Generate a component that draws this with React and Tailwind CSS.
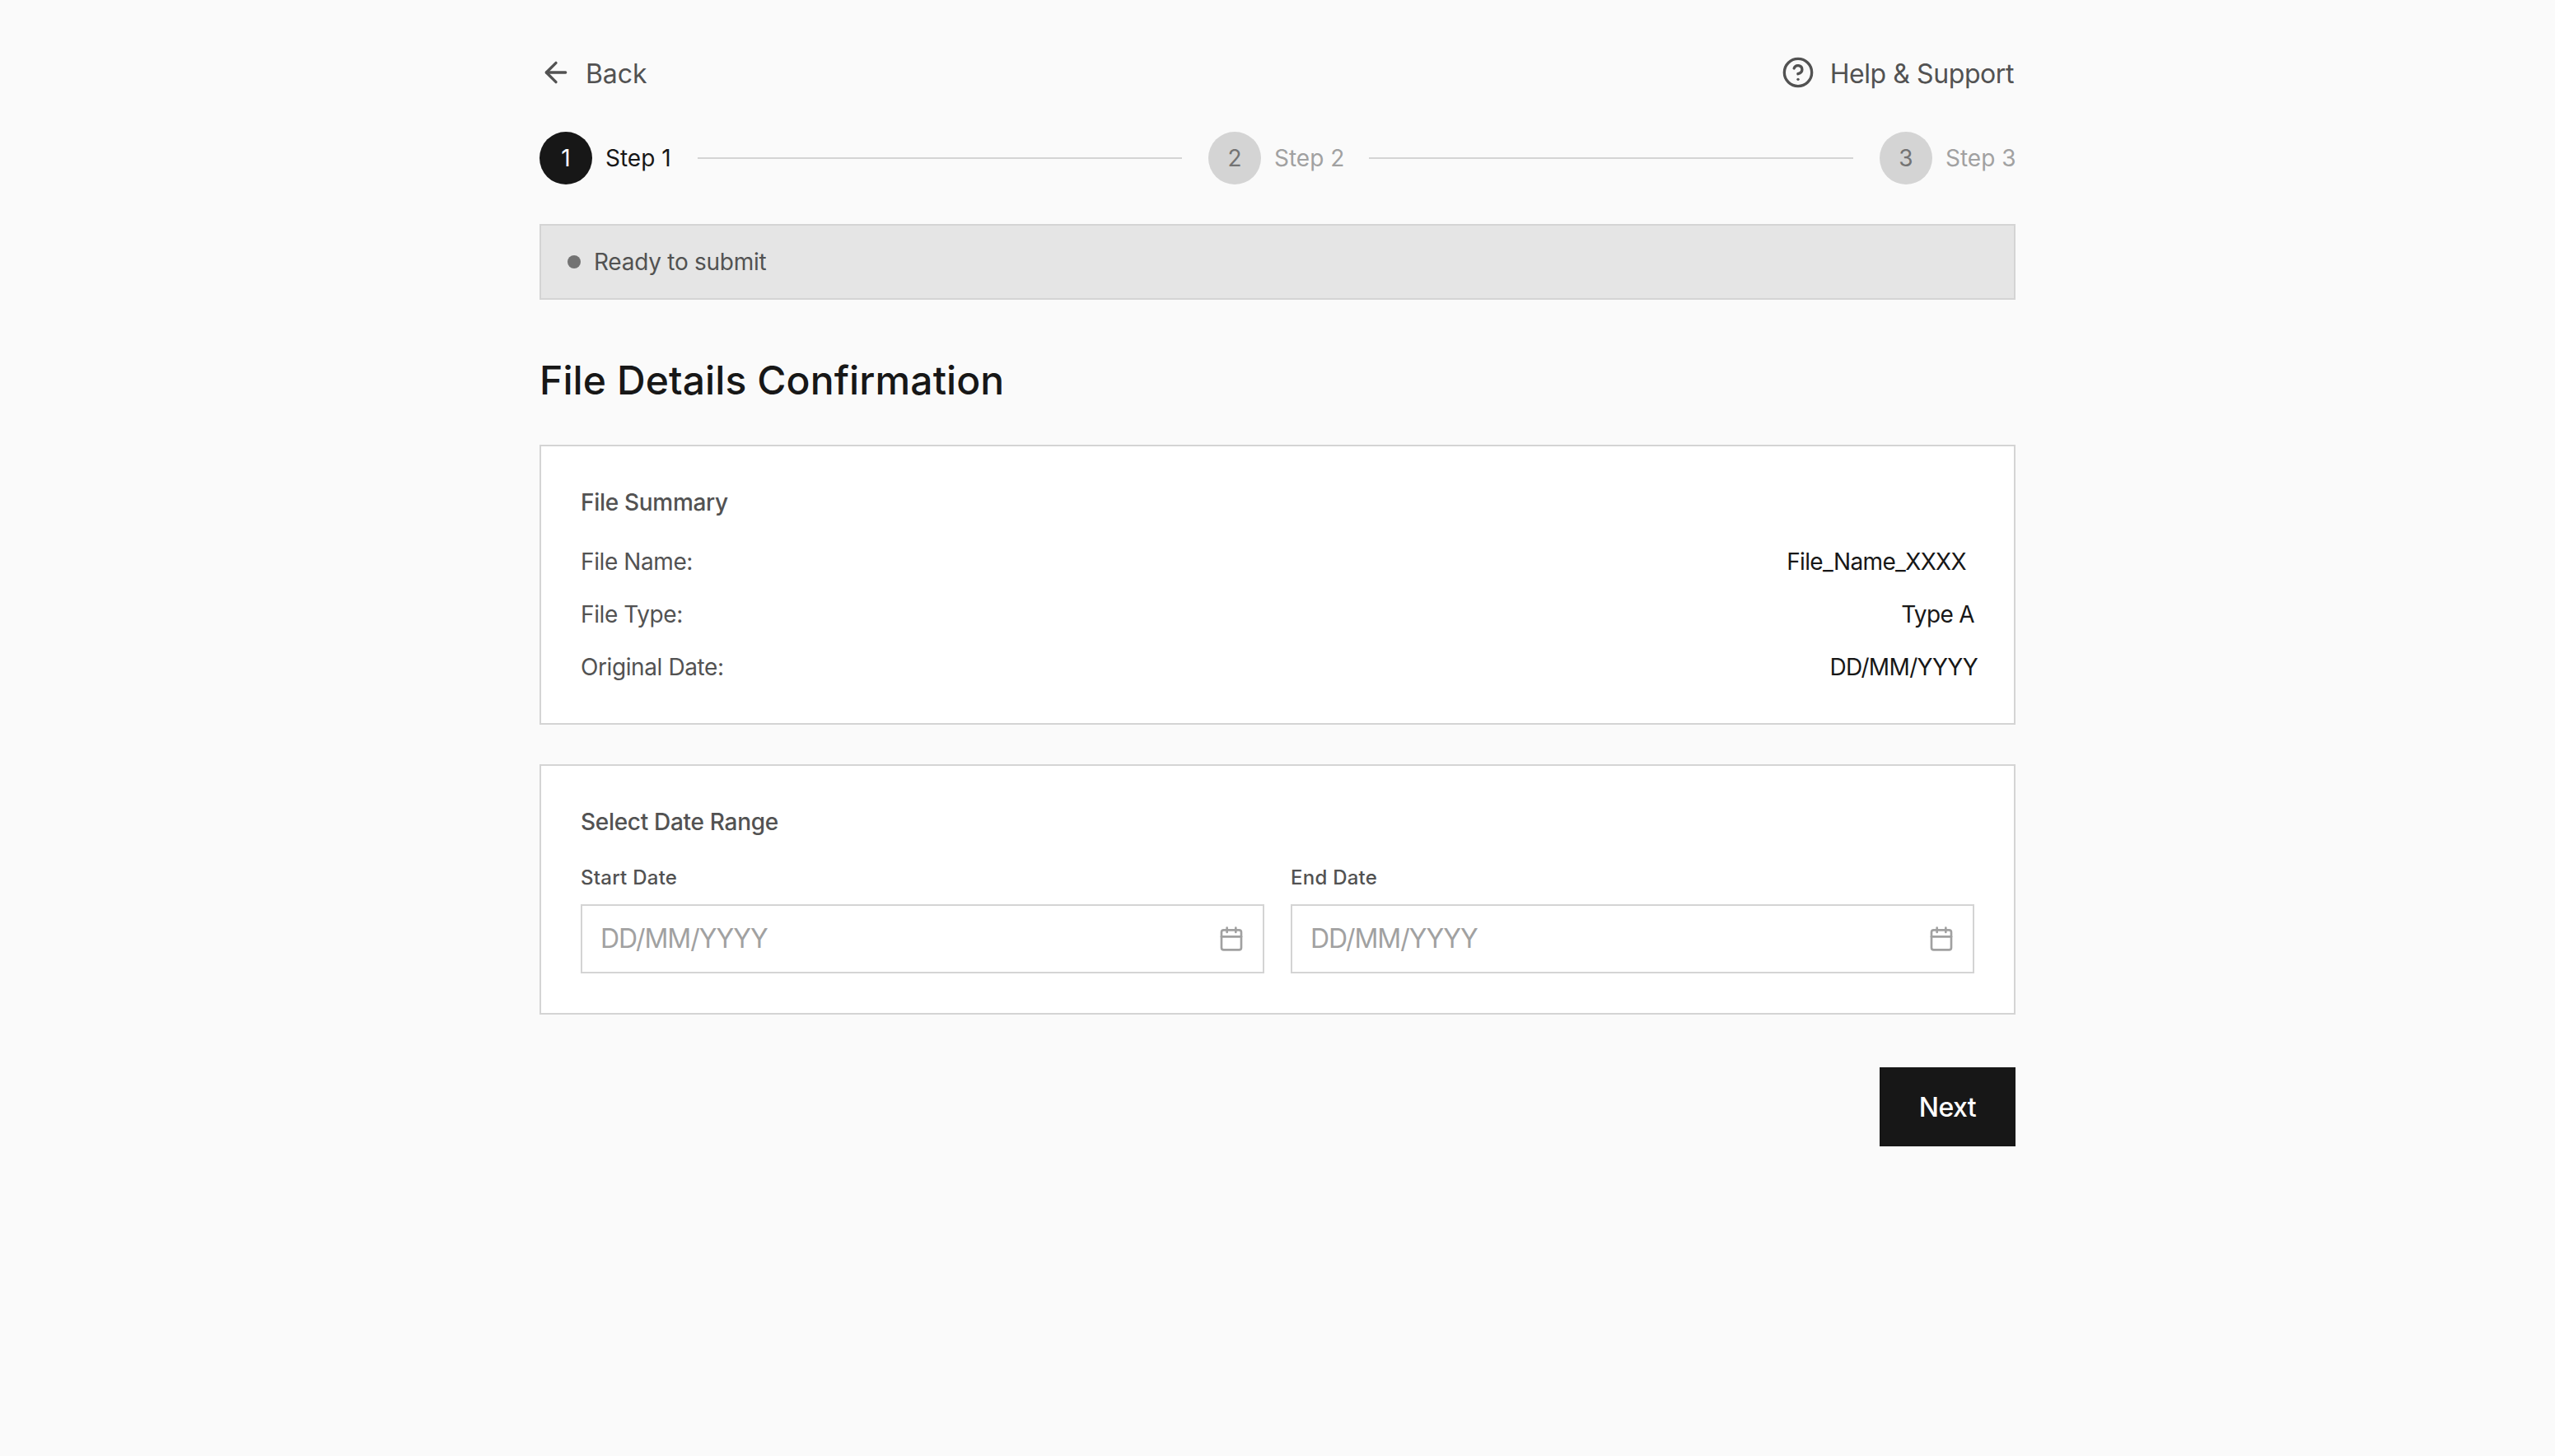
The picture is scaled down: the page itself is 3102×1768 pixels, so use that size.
import React from 'react';
import { ArrowLeft, Calendar, CircleHelp } from 'lucide-react';

function Step({ number, label, labelWidth, active }) {
  return (
    <div className="flex items-center gap-4 shrink-0">
      <div
        className={
          active
            ? 'w-16 h-16 rounded-full bg-neutral-900 text-white flex items-center justify-center text-[28px] leading-10'
            : 'w-16 h-16 rounded-full bg-neutral-300 text-neutral-500 flex items-center justify-center text-[28px] leading-10'
        }
      >
        {number}
      </div>
      <span className={`${labelWidth} whitespace-nowrap text-[28px] leading-10 ${active ? 'text-neutral-900' : 'text-neutral-400'}`}>
        {label}
      </span>
    </div>
  );
}

function Line() {
  return <div className="flex-1 h-[2px] mx-8 bg-neutral-300" />;
}

function DateField({ label }) {
  return (
    <div>
      <label className="block text-2xl leading-8 font-medium tracking-[0.25px] text-neutral-600 mb-4">{label}</label>
      <div className="h-[84px] border-2 border-neutral-300 bg-white flex items-center justify-between pl-[22px] pr-[22px]">
        <span className="text-[32px] leading-[48px] tracking-[-1px] text-neutral-400">DD/MM/YYYY</span>
        <Calendar size={32} strokeWidth={2} className="text-neutral-400" />
      </div>
    </div>
  );
}

function SummaryRow({ label, value, valueClass }) {
  return (
    <div className="flex justify-between">
      <span className="text-neutral-600 tracking-[-0.4px]">{label}</span>
      <span className={`text-neutral-900 tracking-[-0.65px] ${valueClass}`}>{value}</span>
    </div>
  );
}

export default function App() {
  return (
    <div className="min-h-screen bg-neutral-50 font-[Inter,sans-serif]">
      <div className="w-[1792px] mx-auto pt-16">
        {/* Top bar */}
        <div className="flex items-center justify-between mb-12 h-12">
          <div className="flex items-center gap-4 text-neutral-600 text-[32px] leading-[48px]">
            <ArrowLeft size={40} />
            <span className="pt-1 tracking-[-0.1px]">Back</span>
          </div>
          <div className="flex items-center gap-[19px] pr-[2px] text-neutral-600 text-[32px] leading-[48px]">
            <CircleHelp size={40} />
            <span className="pt-1 tracking-[-0.42px]">Help &amp; Support</span>
          </div>
        </div>

        {/* Stepper */}
        <div className="flex items-center mb-12">
          <Step number="1" label="Step 1" labelWidth="w-[80px]" active />
          <Line />
          <Step number="2" label="Step 2" labelWidth="w-[83px]" />
          <Line />
          <Step number="3" label="Step 3" labelWidth="w-[85px]" />
        </div>

        {/* Status */}
        <div className="flex items-center gap-4 bg-neutral-200 border-2 border-neutral-300 px-8 py-6 mb-16">
          <div className="w-4 h-4 rounded-full bg-neutral-500" />
          <span className="text-[28px] leading-10 tracking-[-0.26px] text-neutral-600">Ready to submit</span>
        </div>

        <h1 className="text-[48px] leading-16 pt-[2px] mb-[46px] font-[450] tracking-[0.1px] text-neutral-900">File Details Confirmation</h1>

        {/* File summary */}
        <div className="bg-white border-2 border-neutral-300 p-12 mb-12">
          <h2 className="text-[28px] leading-10 font-[450] tracking-[-0.3px] text-neutral-600 mb-8">File Summary</h2>
          <div className="flex flex-col gap-6 text-[28px] leading-10">
            <SummaryRow label="File Name:" value="File_Name_XXXX" valueClass="pr-[10px]" />
            <SummaryRow label="File Type:" value="Type A" valueClass="" />
            <SummaryRow label="Original Date:" value="DD/MM/YYYY" valueClass="-mr-1" />
          </div>
        </div>

        {/* Date range */}
        <div className="bg-white border-2 border-neutral-300 p-12 mb-16">
          <h2 className="text-[28px] leading-10 font-[450] tracking-[-0.3px] text-neutral-600 mb-8">Select Date Range</h2>
          <div className="grid grid-cols-2 gap-8">
            <DateField label="Start Date" />
            <DateField label="End Date" />
          </div>
        </div>

        <div className="flex justify-end">
          <button className="bg-neutral-900 text-white text-[32px] leading-[48px] font-[450] tracking-[-0.6px] px-12 pt-[25px] pb-[23px]">Next</button>
        </div>
      </div>
    </div>
  );
}
